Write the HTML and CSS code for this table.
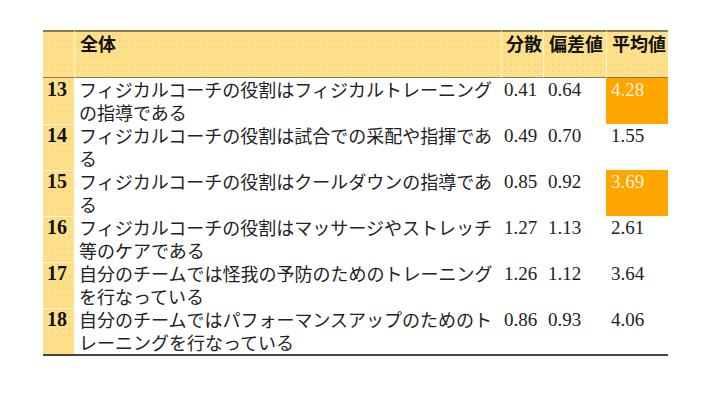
FILE: index.html
```html
<!DOCTYPE html>
<html lang="ja">
<head>
<meta charset="utf-8">
<title>全体</title>
<link rel="stylesheet" href="styles.css">
</head>
<body>
<table class="stats">
  <colgroup>
    <col class="c-num">
    <col class="c-text">
    <col class="c-var">
    <col class="c-sd">
    <col class="c-mean">
  </colgroup>
  <thead>
    <tr>
      <th class="h-num"></th>
      <th class="h-text">全体</th>
      <th class="h-var">分散</th>
      <th class="h-val">偏差値</th>
      <th class="h-val">平均値</th>
    </tr>
  </thead>
  <tbody>
    <tr>
      <td class="num">13</td>
      <td class="text">フィジカルコーチの役割はフィジカルトレーニングの指導である</td>
      <td class="val var">0.41</td>
      <td class="val">0.64</td>
      <td class="val hl">4.28</td>
    </tr>
    <tr>
      <td class="num">14</td>
      <td class="text">フィジカルコーチの役割は試合での采配や指揮である</td>
      <td class="val var">0.49</td>
      <td class="val">0.70</td>
      <td class="val">1.55</td>
    </tr>
    <tr>
      <td class="num">15</td>
      <td class="text">フィジカルコーチの役割はクールダウンの指導である</td>
      <td class="val var">0.85</td>
      <td class="val">0.92</td>
      <td class="val hl">3.69</td>
    </tr>
    <tr>
      <td class="num">16</td>
      <td class="text">フィジカルコーチの役割はマッサージやストレッチ等のケアである</td>
      <td class="val var">1.27</td>
      <td class="val">1.13</td>
      <td class="val">2.61</td>
    </tr>
    <tr>
      <td class="num">17</td>
      <td class="text">自分のチームでは怪我の予防のためのトレーニングを行なっている</td>
      <td class="val var">1.26</td>
      <td class="val">1.12</td>
      <td class="val">3.64</td>
    </tr>
    <tr>
      <td class="num">18</td>
      <td class="text">自分のチームではパフォーマンスアップのためのトレーニングを行なっている</td>
      <td class="val var">0.86</td>
      <td class="val">0.93</td>
      <td class="val">4.06</td>
    </tr>
  </tbody>
</table>
</body>
</html>
```

FILE: styles.css
```css
html, body {
  margin: 0;
  padding: 0;
  background: #ffffff;
}

body {
  font-family: "Noto Sans CJK JP", "Noto Sans", sans-serif;
  color: #1a1a1a;
}

.stats {
  border-collapse: separate;
  border-spacing: 0;
  table-layout: fixed;
  width: 625px;
  margin: 30px 0 0 43px;
}

.c-num { width: 31px; }
.c-text { width: 427px; }
.c-var { width: 42px; }
.c-sd { width: 63px; }
.c-mean { width: 62px; }

.stats th {
  background-color: #ffe08a;
  background-image: radial-gradient(circle, rgba(190, 140, 40, 0.12) 0.7px, transparent 1.1px);
  background-size: 6px 6px;
  border-top: 2px solid #8c7c4e;
  border-bottom: 1px solid #8c7c4e;
  height: 45px;
  padding: 0 0 0 5px;
  vertical-align: top;
  text-align: left;
  font-family: "Noto Sans CJK JP", "Noto Sans", sans-serif;
  font-weight: 700;
  font-size: 18px;
  line-height: 23px;
  color: #111;
}

.stats th + th {
  border-left: 1px solid #fff4cf;
}

.stats th.h-var {
  padding-left: 4px;
}

.stats td {
  height: 46px;
  padding: 0;
  vertical-align: top;
  line-height: 23px;
  font-size: 18px;
}

.stats td.num {
  background-color: #ffe08a;
  background-image: radial-gradient(circle, rgba(190, 140, 40, 0.12) 0.7px, transparent 1.1px);
  background-size: 6px 6px;
  padding-left: 4px;
  font-family: "Liberation Serif", "DejaVu Serif", serif;
  font-weight: 700;
  font-size: 20px;
  color: #111;
}

.stats tbody tr + tr td.num {
  background-image:
    linear-gradient(to bottom, #fff4d6 0, #fff4d6 1px, transparent 1px),
    radial-gradient(circle, rgba(190, 140, 40, 0.12) 0.7px, transparent 1.1px);
  background-size: 100% 100%, 6px 6px;
  background-repeat: no-repeat, repeat;
}

.stats td.text {
  padding-left: 5px;
  font-family: "Noto Sans CJK JP", "Noto Sans", sans-serif;
  font-weight: 400;
  color: #222;
}

.stats td.val {
  padding-left: 5px;
  font-family: "Liberation Serif", "DejaVu Serif", serif;
  font-size: 19px;
  color: #222;
}

.stats td.var {
  padding-left: 3px;
}

.stats td.hl {
  background: #ffa500;
  color: #fff6dc;
}

.stats tbody tr:last-child td {
  border-bottom: 2px solid #444444;
}
```
